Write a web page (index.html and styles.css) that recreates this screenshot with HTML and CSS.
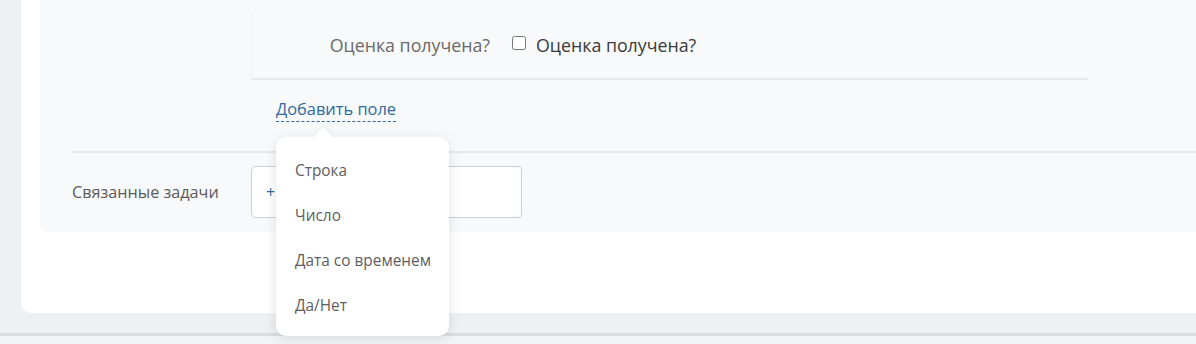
FILE: index.html
```html
<!doctype html>
<html lang="ru">
<head>
	<meta charset="UTF-8">
	<title>Поля задачи</title>
	<link rel="stylesheet" href="styles.css">
</head>
<body>
	<div class="screen">
		<div class="card">
			<div class="panel">
				<div class="fields">
					<div class="field-row">
						<div class="field-label">Оценка получена?</div>
						<label class="check">
							<input type="checkbox">
							<span>Оценка получена?</span>
						</label>
					</div>
					<div class="add-wrap">
						<a class="add-link" href="#">Добавить поле</a>
						<div class="menu">
							<div class="menu-item">Строка</div>
							<div class="menu-item">Число</div>
							<div class="menu-item">Дата со временем</div>
							<div class="menu-item">Да/Нет</div>
						</div>
					</div>
				</div>
				<div class="related">
					<div class="related-label">Связанные задачи</div>
					<div class="related-box"><span class="plus">+</span></div>
				</div>
			</div>
		</div>
		<div class="footer-strip"></div>
	</div>
</body>
</html>
```

FILE: styles.css
```css
* {
	box-sizing: border-box;
}
body {
	margin: 0;
	background: #eef1f4;
	font-family: "Open Sans", "Noto Sans", sans-serif;
	font-size: 15px;
	color: #555;
	overflow: hidden;
}
.screen {
	height: 344px;
}
/*------------------------------card-------------------------------*/
.card {
	margin-left: 21px;
	height: 313px;
	background: #fff;
	border-bottom-left-radius: 10px;
	padding-left: 19px;
}
.panel {
	height: 232px;
	background: #f8f9fb;
	border-bottom-left-radius: 8px;
	position: relative;
}
.fields {
	margin-left: 211px;
	padding-top: 13px;
}
.field-row {
	width: 837px;
	height: 67px;
	display: flex;
	align-items: center;
	border-left: 1px solid #eff0f2;
	border-bottom: 2px solid #e6e8eb;
	padding-bottom: 1px;
}
.field-label {
	width: 238px;
	text-align: right;
	font-size: 17.8px;
	color: #6a6a6a;
}
.check {
	display: flex;
	align-items: center;
	margin-left: 22px;
	font-size: 17.8px;
	color: #3a3a3a;
}
.check input {
	width: 14px;
	height: 14px;
	margin: 0 10px 0 0;
	position: relative;
	top: -2px;
}
/*------------------------------add field-------------------------------*/
.add-wrap {
	position: relative;
	padding: 17px 0 0 25px;
	height: 71px;
}
.add-link {
	font-size: 16.4px;
	color: #2f6a9e;
	text-decoration: none;
	border-bottom: 1px dashed #2f6a9e;
	padding-bottom: 1px;
}
.menu {
	position: absolute;
	left: 25px;
	top: 57px;
	width: 173px;
	height: 199px;
	background: #fff;
	border-radius: 10px;
	box-shadow: 0 3px 14px rgba(0, 0, 0, 0.11);
	padding-top: 11px;
	z-index: 2;
}
.menu:before {
	content: "";
	position: absolute;
	left: 40px;
	top: -7px;
	width: 14px;
	height: 14px;
	background: #fff;
	transform: rotate(45deg);
	border-radius: 2px;
	box-shadow: -2px -2px 5px rgba(0, 0, 0, 0.04);
}
.menu-item {
	position: relative;
	height: 45px;
	line-height: 45px;
	padding-left: 19px;
	font-size: 15.4px;
	color: #5e5e5e;
}
/*------------------------------related-------------------------------*/
.related {
	margin-left: 32px;
	border-top: 2px solid #e6e8eb;
	display: flex;
	align-items: center;
	padding-top: 13px;
}
.related-label {
	width: 179px;
	font-size: 16.2px;
	color: #5a5a5a;
}
.related-box {
	width: 271px;
	height: 52px;
	border: 1px solid #ccd0d5;
	border-radius: 4px;
	background: #fff;
	display: flex;
	align-items: center;
	padding-left: 14px;
}
.plus {
	color: #2f6a9e;
	font-size: 16px;
}
/*------------------------------bottom-------------------------------*/
.footer-strip {
	height: 31px;
	background: linear-gradient(#eef0f2 0, #eef0f2 20px, #d9dbdd 20px, #dcdee0 23px, #f3f4f5 23px);
}
```
